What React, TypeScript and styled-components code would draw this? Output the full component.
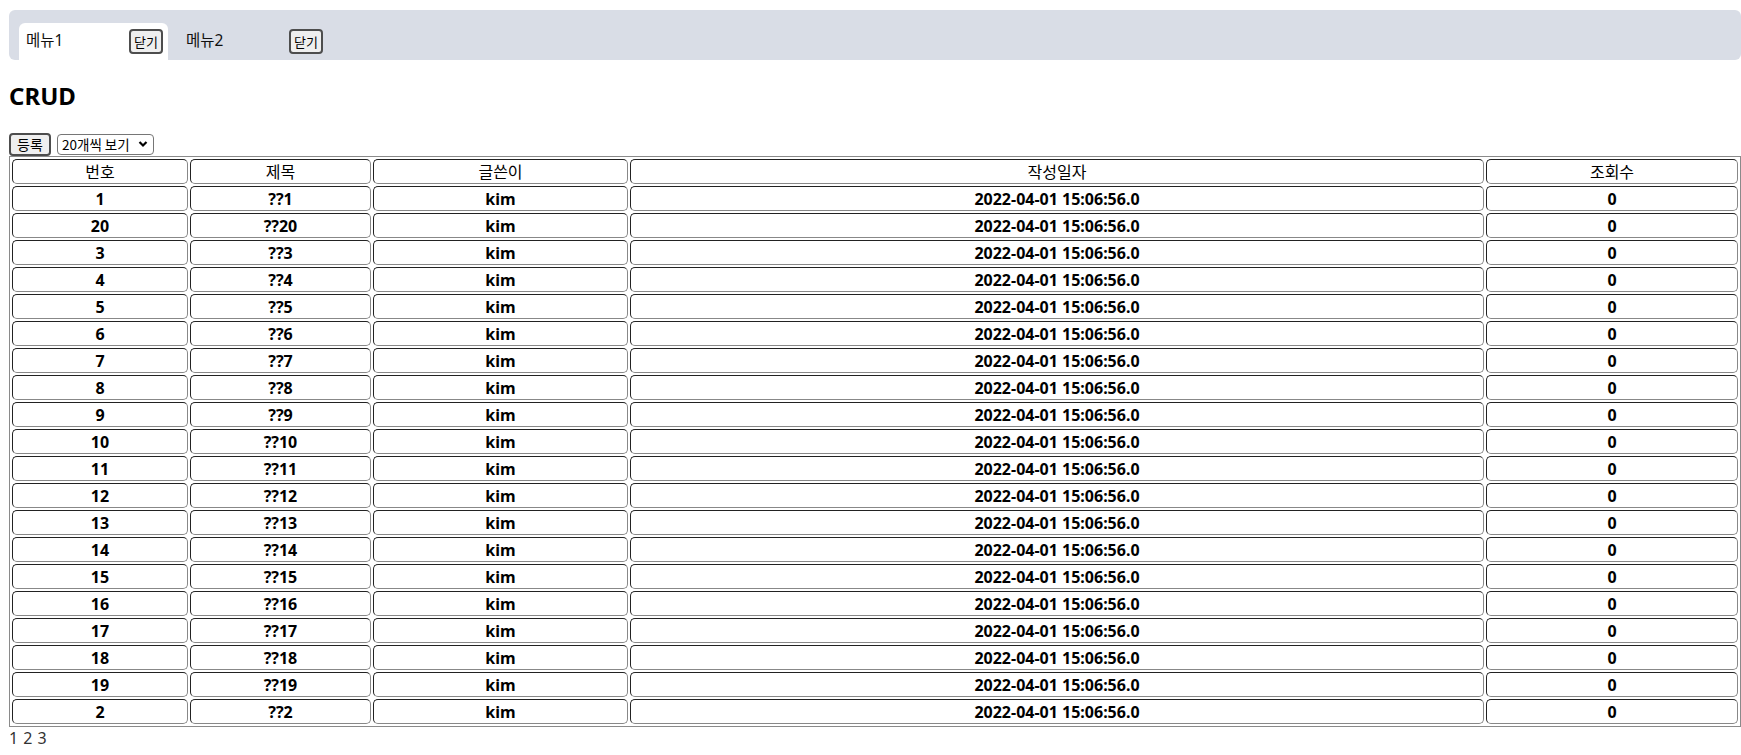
import React from "react";
import styled, { createGlobalStyle } from "styled-components";

const GlobalStyle = createGlobalStyle`
  body {
    margin: 10px 0 8px 9px;
    background: #fff;
    color: #000;
    font-family: "Noto Sans", "Noto Sans CJK KR", sans-serif;
  }
`;

const TabBar = styled.div`
  display: flex;
  gap: 11px;
  height: 50px;
  box-sizing: border-box;
  padding: 13px 0 0 10px;
  background: #d9dde6;
  border-radius: 6px;
`;

const Tab = styled.div<{ $active?: boolean }>`
  width: 149px;
  height: 37px;
  box-sizing: border-box;
  padding: 0 5px 0 7px;
  display: flex;
  align-items: center;
  justify-content: space-between;
  background: ${(p) => (p.$active ? "#fff" : "transparent")};
  border-radius: 6px 6px 0 0;
`;

const TabLabel = styled.span`
  font-size: 15.5px;
  line-height: 20px;
  margin-top: -3px;
  color: #111;
`;

const SmallButton = styled.button`
  height: 25px;
  padding: 0 3px;
  box-sizing: border-box;
  font-family: "Noto Sans CJK KR", sans-serif;
  font-size: 13px;
  line-height: 19px;
  color: #000;
  background: #efefef;
  border: 2px solid #4d4d4d;
  border-radius: 4px;
  cursor: pointer;
`;

const Title = styled.h2`
  font-size: 24px;
  font-weight: 700;
  line-height: 32px;
  margin: 20px 0 20px 0;
`;

const Toolbar = styled.div`
  display: flex;
  align-items: center;
  gap: 6px;
  height: 24px;
`;

const ActionButton = styled(SmallButton)`
  height: 23px;
  width: 42px;
  font-size: 14px;
`;

const chevron =
  "data:image/svg+xml;utf8,<svg xmlns='http://www.w3.org/2000/svg' width='10' height='8' viewBox='0 0 10 8'><path d='M1.5 2 L5 5.5 L8.5 2' fill='none' stroke='black' stroke-width='2.2'/></svg>";

const PageSelect = styled.select`
  appearance: none;
  -webkit-appearance: none;
  height: 21px;
  width: 97px;
  box-sizing: border-box;
  font-family: "Noto Sans CJK KR", sans-serif;
  font-size: 13.5px;
  line-height: 19px;
  color: #000;
  background: #fff url("${chevron}") no-repeat right 5px center;
  border: 1px solid #767676;
  border-radius: 4px;
  padding: 0 16px 0 4px;
`;

const Table = styled.table`
  width: 100%;
  table-layout: fixed;
  border-collapse: separate;
  border-spacing: 2px;
  border: 1px solid #8a8a8a;
  margin-top: 0;
`;

const HeadCell = styled.th`
  height: 25px;
  box-sizing: border-box;
  padding: 1px 1px 0;
  font-size: 16px;
  font-weight: 400;
  line-height: 21px;
  text-align: center;
  border: 1px solid;
  border-color: #222 #888 #888 #222;
  border-radius: 5px;
`;

const Cell = styled.td`
  height: 25px;
  box-sizing: border-box;
  padding: 2px 1px 0;
  font-size: 16px;
  font-weight: 700;
  line-height: 21px;
  text-align: center;
  border: 1px solid;
  border-color: #222 #888 #888 #222;
  border-radius: 5px;
`;

const Pager = styled.div`
  font-size: 16px;
  line-height: 22px;
  color: #333;
  word-spacing: 1px;
`;

const columns = [
  { label: "번호", width: "176px" },
  { label: "제목", width: "181px" },
  { label: "글쓴이", width: "255px" },
  { label: "작성일자", width: "auto" },
  { label: "조회수", width: "252px" },
];

const order = [1, 20, 3, 4, 5, 6, 7, 8, 9, 10, 11, 12, 13, 14, 15, 16, 17, 18, 19, 2];

const rows = order.map((n) => ({
  no: n,
  title: `??${n}`,
  writer: "kim",
  date: "2022-04-01 15:06:56.0",
  views: 0,
}));

export default function App() {
  return (
    <>
      <GlobalStyle />
      <TabBar>
        <Tab $active>
          <TabLabel>메뉴1</TabLabel>
          <SmallButton>닫기</SmallButton>
        </Tab>
        <Tab>
          <TabLabel>메뉴2</TabLabel>
          <SmallButton>닫기</SmallButton>
        </Tab>
      </TabBar>
      <Title>CRUD</Title>
      <Toolbar>
        <ActionButton>등록</ActionButton>
        <PageSelect defaultValue="20">
          <option value="10">10개씩 보기</option>
          <option value="20">20개씩 보기</option>
          <option value="30">30개씩 보기</option>
        </PageSelect>
      </Toolbar>
      <Table>
        <colgroup>
          {columns.map((c) => (
            <col key={c.label} style={{ width: c.width }} />
          ))}
        </colgroup>
        <thead>
          <tr>
            {columns.map((c) => (
              <HeadCell key={c.label}>{c.label}</HeadCell>
            ))}
          </tr>
        </thead>
        <tbody>
          {rows.map((r) => (
            <tr key={r.no}>
              <Cell>{r.no}</Cell>
              <Cell>{r.title}</Cell>
              <Cell>{r.writer}</Cell>
              <Cell>{r.date}</Cell>
              <Cell>{r.views}</Cell>
            </tr>
          ))}
        </tbody>
      </Table>
      <Pager>1 2 3</Pager>
    </>
  );
}
